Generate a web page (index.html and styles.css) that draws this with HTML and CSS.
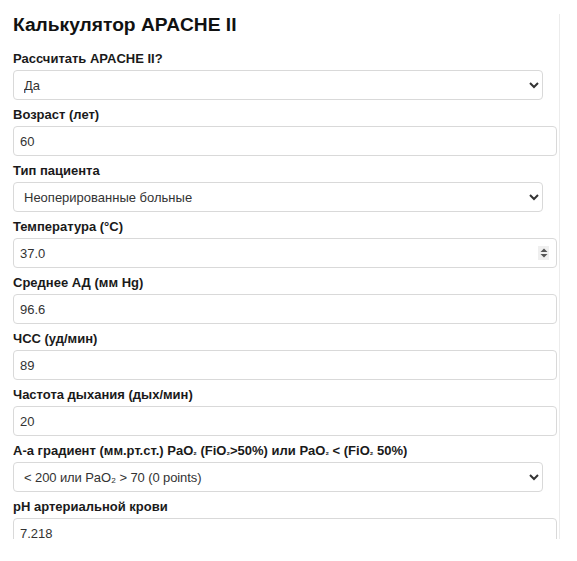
FILE: index.html
```html
<!DOCTYPE html>
<html lang="ru">
<head>
<meta charset="utf-8">
<title>Калькулятор APACHE II</title>
<link rel="stylesheet" href="styles.css">
</head>
<body>
<div class="panel">
  <h2 class="title">Калькулятор APACHE II</h2>
  <div class="field">
    <label class="lbl">Рассчитать APACHE II?</label>
    <select class="ctl sel"><option>Да</option><option>Нет</option></select>
  </div>
  <div class="field">
    <label class="lbl">Возраст (лет)</label>
    <input class="ctl inp" type="text" value="60">
  </div>
  <div class="field">
    <label class="lbl">Тип пациента</label>
    <select class="ctl sel"><option>Неоперированные больные</option></select>
  </div>
  <div class="field">
    <label class="lbl">Температура (°C)</label>
    <div class="spinwrap">
      <input class="ctl inp" type="text" value="37.0">
      <span class="spin"><svg width="8" height="12" viewBox="0 0 8 12"><path d="M0.5 5 L4 1.5 L7.5 5 Z M0.5 7 L7.5 7 L4 10.5 Z" fill="#555"/></svg></span>
    </div>
  </div>
  <div class="field">
    <label class="lbl">Среднее АД (мм Hg)</label>
    <input class="ctl inp" type="text" value="96.6">
  </div>
  <div class="field">
    <label class="lbl">ЧСС (уд/мин)</label>
    <input class="ctl inp" type="text" value="89">
  </div>
  <div class="field">
    <label class="lbl">Частота дыхания (дых/мин)</label>
    <input class="ctl inp" type="text" value="20">
  </div>
  <div class="field">
    <label class="lbl">A-a градиент (мм.рт.ст.) PaO<span class="sub">₂</span> (FiO<span class="sub">₂</span>&gt;50%) или PaO<span class="sub">₂</span> &lt; (FiO<span class="sub">₂</span> 50%)</label>
    <select class="ctl sel optsm"><option>&lt; 200 или PaO₂ &gt; 70 (0 points)</option></select>
  </div>
  <div class="field">
    <label class="lbl">pH артериальной крови</label>
    <input class="ctl inp" type="text" value="7.218">
  </div>
</div>
</body>
</html>
```

FILE: styles.css
```css
html, body {
  margin: 0;
  padding: 0;
  background: #fff;
}
body {
  font-family: "Liberation Sans", Arial, sans-serif;
  color: #222;
}
.panel {
  margin-top: 14px;
  width: 546px;
  height: 525px;
  padding: 0 0 0 13px;
  border-right: 1px solid #ececec;
  overflow: hidden;
  box-sizing: content-box;
}
.title {
  margin: 0 0 16px 0;
  font-size: 19.2px;
  font-weight: bold;
  color: #111;
  line-height: 21px;
}
.field {
  margin-bottom: 7px;
}
.lbl {
  display: block;
  font-size: 13px;
  font-weight: bold;
  line-height: 16px;
  height: 16px;
  margin-bottom: 3px;
  color: #1a1a1a;
}
.sub {
  font-size: 8px;
  line-height: 0;
}
.ctl {
  display: block;
  height: 30px;
  border: 1px solid #d9d9d9;
  border-radius: 4px;
  background: #fff;
  font-family: "Liberation Sans", Arial, sans-serif;
  font-size: 13px;
  color: #333;
  margin: 0;
}
.sel {
  width: 530px;
  padding: 0 6px;
  box-sizing: border-box;
}
.optsm {
  letter-spacing: -0.1px;
}
.inp {
  width: 530px;
  padding: 0 6px;
  box-sizing: content-box;
  height: 28px;
}
.spinwrap {
  position: relative;
  width: 544px;
}
.spin {
  position: absolute;
  right: 8px;
  top: 8px;
  width: 11px;
  height: 14px;
  background: #efefef;
  display: flex;
  align-items: center;
  justify-content: center;
}
```
